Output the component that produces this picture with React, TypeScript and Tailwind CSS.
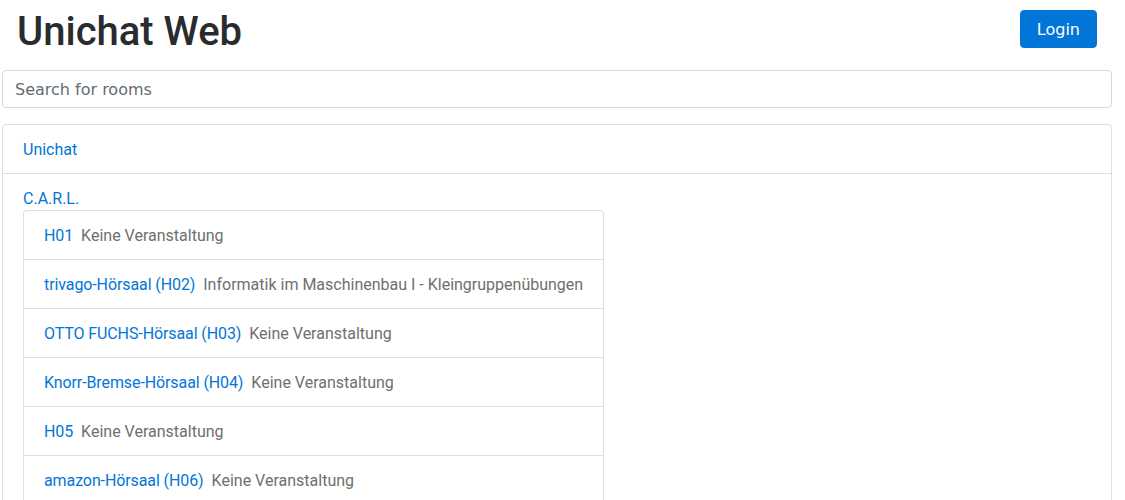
import React from 'react';

type Room = {
  name: string;
  event: string;
};

const rooms: Room[] = [
  { name: 'H01', event: 'Keine Veranstaltung' },
  { name: 'trivago-Hörsaal (H02)', event: 'Informatik im Maschinenbau I - Kleingruppenübungen' },
  { name: 'OTTO FUCHS-Hörsaal (H03)', event: 'Keine Veranstaltung' },
  { name: 'Knorr-Bremse-Hörsaal (H04)', event: 'Keine Veranstaltung' },
  { name: 'H05', event: 'Keine Veranstaltung' },
  { name: 'amazon-Hörsaal (H06)', event: 'Keine Veranstaltung' },
  { name: 'H07', event: 'Keine Veranstaltung' },
];

const roboto = "font-['Roboto',_'Liberation_Sans',_sans-serif]";

export default function App() {
  return (
    <div className={`ml-[2px] w-[1110px] bg-white text-[#292b2c] ${roboto}`}>
      <div className="flex items-start justify-between px-[15px] pt-[8px] pb-[14px]">
        <h1 className="text-[40px] leading-[48px] font-medium">Unichat Web</h1>
        <button className="mt-[2px] h-[38px] rounded-[4px] border border-[#0275d8] bg-[#0275d8] px-4 pt-[1px] font-['DejaVu_Sans',_sans-serif] text-[16px] text-white">
          Login
        </button>
      </div>

      <input
        type="text"
        placeholder="Search for rooms"
        className="block h-[38px] w-full rounded-[4px] border border-[#d9d9d9] px-3 font-['DejaVu_Sans',_sans-serif] text-[16px] text-[#464a4c] placeholder:text-[#636c72] outline-none"
      />

      <div className="mt-[16px] rounded-[4px] border border-[#dfdfdf]">
        <div className="border-b border-[#dfdfdf] px-5 pt-[13px] pb-[11px] text-[16px] leading-6">
          <a href="#" className="text-[#0275d8]">Unichat</a>
        </div>
        <div className="px-5 pt-[13px] text-[16px] leading-6">
          <a href="#" className="text-[#0275d8]">C.A.R.L.</a>
          <div className="-mt-[1px] w-fit rounded-[4px] border-x border-t border-[#dfdfdf]">
            {rooms.map((room) => (
              <div key={room.name} className="flex border-b border-[#dfdfdf] px-5 pt-[13px] pb-[11px] whitespace-nowrap">
                <a href="#" className="tracking-[-0.1px] text-[#0275d8]">{room.name}</a>
                <span className="ml-2 text-[#6f6f6f]">{room.event}</span>
              </div>
            ))}
          </div>
        </div>
      </div>
    </div>
  );
}
